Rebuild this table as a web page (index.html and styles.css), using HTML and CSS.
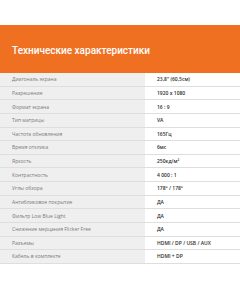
FILE: index.html
```html
<!DOCTYPE html>
<html lang="ru">
<head>
<meta charset="utf-8">
<link rel="stylesheet" href="styles.css">
</head>
<body>
<div class="page">
  <div class="banner"><h1 class="title">Технические характеристики</h1></div>
  <div class="specs">
    <div class="row"><div class="label">Диагональ экрана</div><div class="value">23,8" (60,5см)</div></div>
    <div class="row"><div class="label">Разрешение</div><div class="value">1920 x 1080</div></div>
    <div class="row"><div class="label">Формат экрана</div><div class="value">16 : 9</div></div>
    <div class="row"><div class="label">Тип матрицы</div><div class="value">VA</div></div>
    <div class="row"><div class="label">Частота обновления</div><div class="value">165Гц</div></div>
    <div class="row"><div class="label">Время отклика</div><div class="value">6мс</div></div>
    <div class="row"><div class="label">Яркость</div><div class="value">250кд/м²</div></div>
    <div class="row"><div class="label">Контрастность</div><div class="value">4 000 : 1</div></div>
    <div class="row"><div class="label">Углы обзора</div><div class="value">178° / 178°</div></div>
    <div class="row"><div class="label">Антибликовое покрытие</div><div class="value">ДА</div></div>
    <div class="row"><div class="label">Фильтр Low Blue Light</div><div class="value">ДА</div></div>
    <div class="row"><div class="label">Снижение мерцания Flicker Free</div><div class="value">ДА</div></div>
    <div class="row"><div class="label">Разъемы</div><div class="value">HDMI / DP / USB / AUX</div></div>
    <div class="row"><div class="label">Кабель в комплекте</div><div class="value">HDMI + DP</div></div>
  </div>
</div>
</body>
</html>
```
FILE: styles.css
```css
html, body { margin: 0; padding: 0; background: #ffffff; }
body { font-family: "Open Sans", "Liberation Sans", sans-serif; width: 240px; height: 290px; overflow: hidden; }
.page { padding-top: 25px; }
.banner { background: #f07022; height: 48px; display: flex; align-items: center; padding-left: 12px; }
.title { margin: 0; margin-top: 3px; color: #ffffff; font-family: Roboto, "Open Sans", sans-serif; font-size: 10px; font-weight: 500; letter-spacing: 0; }
.specs { display: flex; flex-direction: column; }
.row { display: grid; grid-template-columns: 145px 1fr; height: 13.64px; box-sizing: border-box; border-bottom: 1px solid #dedede; }
.label { background: #efefef; color: #7a7a7a; font-size: 5px; padding-left: 12px; display: flex; align-items: center; }
.value { background: #ffffff; color: #2e2e2e; font-size: 5px; font-weight: 600; padding-left: 12px; display: flex; align-items: center; }
```
